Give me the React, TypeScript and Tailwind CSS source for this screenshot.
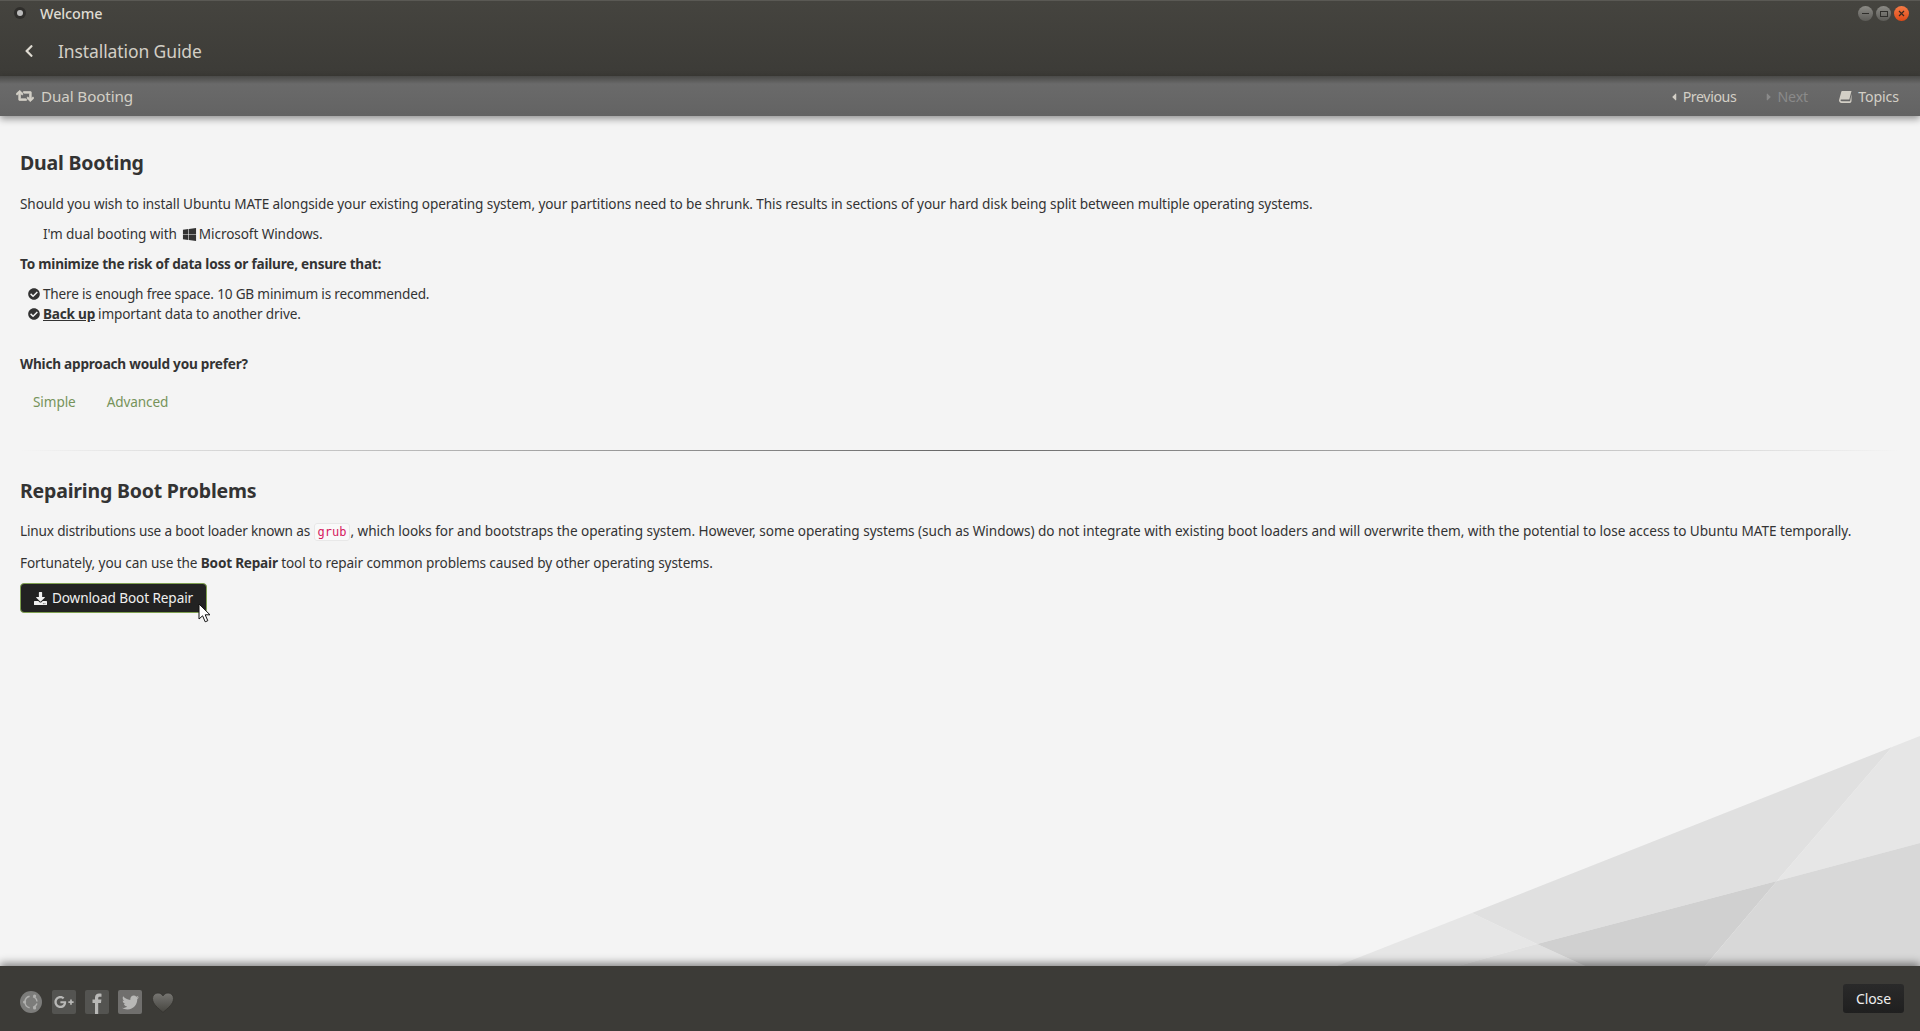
import { FaCaretLeft, FaCaretRight, FaCheckCircle, FaChevronLeft, FaDownload, FaGooglePlusG, FaRetweet, FaTwitter, FaWindows } from "react-icons/fa";

function WindowButtons() {
  return (
    <div className="flex items-center gap-[3px]">
      <div className="w-[15px] h-[15px] rounded-full bg-gradient-to-b from-[#8c8b86] to-[#5c5b57] flex items-center justify-center">
        <div className="w-[7px] h-[1px] bg-[#2f2e2b]" />
      </div>
      <div className="w-[15px] h-[15px] rounded-full bg-gradient-to-b from-[#8c8b86] to-[#5c5b57] flex items-center justify-center">
        <div className="w-[8px] h-[6px] border border-[#2f2e2b]" />
      </div>
      <div className="w-[15px] h-[15px] rounded-full bg-gradient-to-b from-[#f47a45] to-[#dd4814] flex items-center justify-center">
        <svg width="7" height="7" viewBox="0 0 7 7" stroke="#3a2a20" strokeWidth="1.2">
          <path d="M1 1l5 5M6 1l-5 5" />
        </svg>
      </div>
    </div>
  );
}

function Backdrop() {
  return (
    <svg className="absolute left-0 bottom-0" width="1920" height="250" viewBox="0 717 1920 250">
      <polygon points="1337,967 1472,914 1537,945 1458,967" fill="#e6e6e6" />
      <polygon points="1458,967 1537,945 1585,967" fill="#e0e0e0" />
      <polygon points="1472,914 1892,748 1777,882 1537,945" fill="#e0e0e0" />
      <polygon points="1892,748 1920,737 1920,844 1777,882" fill="#e6e6e6" />
      <polygon points="1537,945 1777,882 1705,967 1585,967" fill="#d0d0d0" />
      <polygon points="1777,882 1920,844 1920,967 1705,967" fill="#d8d8d8" />
    </svg>
  );
}

export default function App() {
  return (
    <div className="relative w-full h-[1031px] flex flex-col overflow-hidden bg-[#f4f4f4] text-[13.6px] tracking-[-0.1px] text-[#333] font-['Noto_Sans',sans-serif]">
      {/* title bar + header */}
      <div className="h-[76px] shrink-0 bg-gradient-to-b from-[#45443f] to-[#3c3b37] border-t border-[#5a5954]">
        <div className="h-[25px] flex items-center justify-between pl-[14px] pr-[11px]">
          <div className="flex items-center">
            <div className="w-[12px] h-[12px] rounded-full bg-[#2f2e2b] flex items-center justify-center">
              <div className="w-[6px] h-[6px] rounded-full bg-[#bbb]" />
            </div>
            <span className="ml-[14px] text-[14.4px] font-medium text-[#dfdbd2]">Welcome</span>
          </div>
          <WindowButtons />
        </div>
        <div className="h-[50px] flex items-center pl-[22px]">
          <FaChevronLeft className="text-[#dfdbd2] text-[14px]" />
          <span className="ml-[22px] text-[17.5px] tracking-[-0.1px] text-[#d3cfc6]">Installation Guide</span>
        </div>
      </div>

      {/* sub bar */}
      <div className="relative z-10 h-[40px] shrink-0 flex items-center justify-between bg-gradient-to-b from-[#4a4a48] via-[#6a6a6a] via-20% to-[#636363] pl-[16px] pr-[21px] shadow-[0_3px_7px_rgba(0,0,0,0.4)]">
        <div className="flex items-center text-[#d3cfc6]">
          <FaRetweet className="text-[18px]" stroke="currentColor" strokeWidth={24} />
          <span className="ml-[7px] text-[15.2px] tracking-[-0.1px]">Dual Booting</span>
        </div>
        <div className="flex items-center pt-[2px] text-[14.2px] text-[#d3cfc6]">
          <FaCaretLeft className="text-[12px]" />
          <span className="ml-[3px] tracking-[-0.4px]">Previous</span>
          <FaCaretRight className="ml-[27px] text-[12px] text-[#8a8a8a]" />
          <span className="ml-[2px] text-[#8a8a8a]">Next</span>
          {/* slanted book, FontAwesome 4 style */}
          <svg className="ml-[31px]" width="13" height="12" viewBox="0 0 13 12" fill="currentColor">
            <path d="M3 0h9.5l-2.2 8.5H2.6c-.9 0-1.1.5-1 .9.1.5.5.8 1.1.8h8.4L12.5 3v7c-.1.9-.6 2-1.6 2H2.5C1.2 12 .2 11 0 9.6c0-.4 0-.7.2-1L2.3.7C2.4.3 2.7 0 3 0z" />
          </svg>
          <span className="ml-[6px]">Topics</span>
        </div>
      </div>

      {/* page body */}
      <div className="relative flex-1 px-[20px] pt-[35px]">
        <Backdrop />
        <div className="relative">
          <h1 className="text-[19.5px] leading-[24px] font-bold tracking-[-0.2px] text-[#333]">Dual Booting</h1>
          <p className="mt-[19px] leading-[20px]">
            Should you wish to install Ubuntu MATE alongside your existing operating system, your partitions need to be shrunk. This results in sections of your hard disk being split between multiple operating systems.
          </p>
          <p className="mt-[10px] ml-[23px] leading-[20px] flex items-center">
            I'm dual booting with
            <FaWindows className="ml-[5px] mr-[2px] text-[15px]" />
            Microsoft Windows.
          </p>
          <p className="mt-[10px] leading-[20px] font-bold tracking-[-0.22px]">To minimize the risk of data loss or failure, ensure that:</p>
          <ul className="mt-[10px] ml-[8px]">
            <li className="flex items-center h-[20px] tracking-[-0.19px]">
              <FaCheckCircle className="mr-[3px] text-[12px]" />
              There is enough free space. 10 GB minimum is recommended.
            </li>
            <li className="flex items-center h-[20px] tracking-[-0.12px]">
              <FaCheckCircle className="mr-[3px] text-[12px]" />
              <a className="font-bold underline mr-[3px] tracking-[-0.22px]">Back up</a>
              important data to another drive.
            </li>
          </ul>
          <p className="mt-[30px] leading-[20px] font-bold tracking-[-0.22px]">Which approach would you prefer?</p>
          <div className="mt-[18px] ml-[13px] flex gap-[31px] leading-[20px] text-[#76935a]">
            <span>Simple</span>
            <span>Advanced</span>
          </div>
          <div className="mt-[38px] h-px bg-gradient-to-r from-transparent via-[#666] to-transparent" />
          <h1 className="mt-[28px] text-[19.5px] leading-[24px] font-bold tracking-[-0.2px]">Repairing Boot Problems</h1>
          <p className="mt-[18px] leading-[20px] tracking-[-0.05px]">
            <span className="tracking-[-0.17px]">Linux distributions use a boot loader known as</span>{" "}
            <code className="px-[3px] py-[1px] bg-[#f9f9f9] border border-[#e8e8e8] rounded-[3px] text-[12px] tracking-normal text-[#d6205f] font-['DejaVu_Sans_Mono',monospace]">grub</code>
            , which looks for and bootstraps the operating system. However, some operating systems (such as Windows) do not integrate with existing boot loaders and will overwrite them, with the potential to lose access to Ubuntu MATE temporally.
          </p>
          <p className="mt-[11px] leading-[20px]">
            Fortunately, you can use the <b className="tracking-[-0.22px]">Boot Repair</b> tool to repair common problems caused by other operating systems.
          </p>
          <button className="relative mt-[10px] w-[187px] h-[30px] flex items-center justify-center rounded-[4px] border border-[#7fa050] bg-[#222] text-[#f0f0f0]">
            <FaDownload className="mr-[5px] text-[13px]" />
            Download Boot Repair
            {/* mouse pointer */}
            <svg className="absolute left-[177px] top-[19px]" width="14" height="20" viewBox="0 0 14 20">
              <path d="M1 1v15l3.6-3.2 2.6 6 2.6-1.1-2.6-5.9h4.8z" fill="#fff" stroke="#111" strokeWidth="1" />
            </svg>
          </button>
        </div>
      </div>

      {/* footer */}
      <div className="relative h-[65px] shrink-0 flex items-center justify-between bg-[#3c3b37] pl-[20px] pr-[16px] shadow-[0_-3px_8px_rgba(0,0,0,0.45)]">
        <div className="flex items-center gap-[9px] pt-[7px]">
          <svg className="mr-[1px]" width="22" height="22" viewBox="0 0 22 22">
            <circle cx="11" cy="11" r="11" fill="#7c7c7a" />
            <path d="M13 5.6A6 6 0 0 1 17 10.5M17 12.5A6 6 0 0 1 13 16.4M9.6 16.8A6 6 0 0 1 5 11A6 6 0 0 1 9.6 5.2" fill="none" stroke="#b0b0ae" strokeWidth="1.4" />
            <circle cx="4.6" cy="11" r="1.6" fill="#b0b0ae" />
            <circle cx="14.6" cy="5" r="1.6" fill="#b0b0ae" />
            <circle cx="14.6" cy="17" r="1.6" fill="#b0b0ae" />
          </svg>
          <div className="w-[24px] h-[24px] rounded-[2px] bg-[#545451] flex items-center justify-center">
            <FaGooglePlusG className="text-[20px] text-[#b8b8b6]" />
          </div>
          <div className="w-[24px] h-[24px] rounded-[2px] bg-[#545451] overflow-hidden">
            <svg width="24" height="24" viewBox="0 0 24 24" fill="#b8b8b6">
              <path d="M10 24V13H7.5V9.5H10V7.5C10 4.6 11.8 3.5 14 3.5c1 0 2 .1 2.5.2v3h-1.7c-1.4 0-1.6.7-1.6 1.6v1.2h3.2l-.4 3.5h-2.8v11z" />
            </svg>
          </div>
          <div className="w-[24px] h-[24px] rounded-[2px] bg-[#706f6d] flex items-center justify-center">
            <FaTwitter className="text-[17px] text-[#b8b8b6]" />
          </div>
          <svg className="ml-[1px]" width="22" height="21" viewBox="0 0 22 21">
            <defs>
              <linearGradient id="heart" x1="0" y1="0" x2="0" y2="1">
                <stop offset="0" stopColor="#777672" />
                <stop offset="1" stopColor="#45443f" />
              </linearGradient>
            </defs>
            <path d="M11 20.5C6 16 .5 12 .5 6.5.5 3 3.2 1 6 1 8.1 1 10 2.1 11 3.9 12 2.1 13.9 1 16 1 18.8 1 21.5 3 21.5 6.5 21.5 12 16 16 11 20.5z" fill="url(#heart)" stroke="#33322f" strokeWidth="0.8" />
          </svg>
        </div>
        <button className="w-[61px] h-[29px] rounded-[3px] bg-gradient-to-b from-[#2a2a2a] to-[#1f1f1f] text-[14px] text-[#eee]">Close</button>
      </div>
    </div>
  );
}
